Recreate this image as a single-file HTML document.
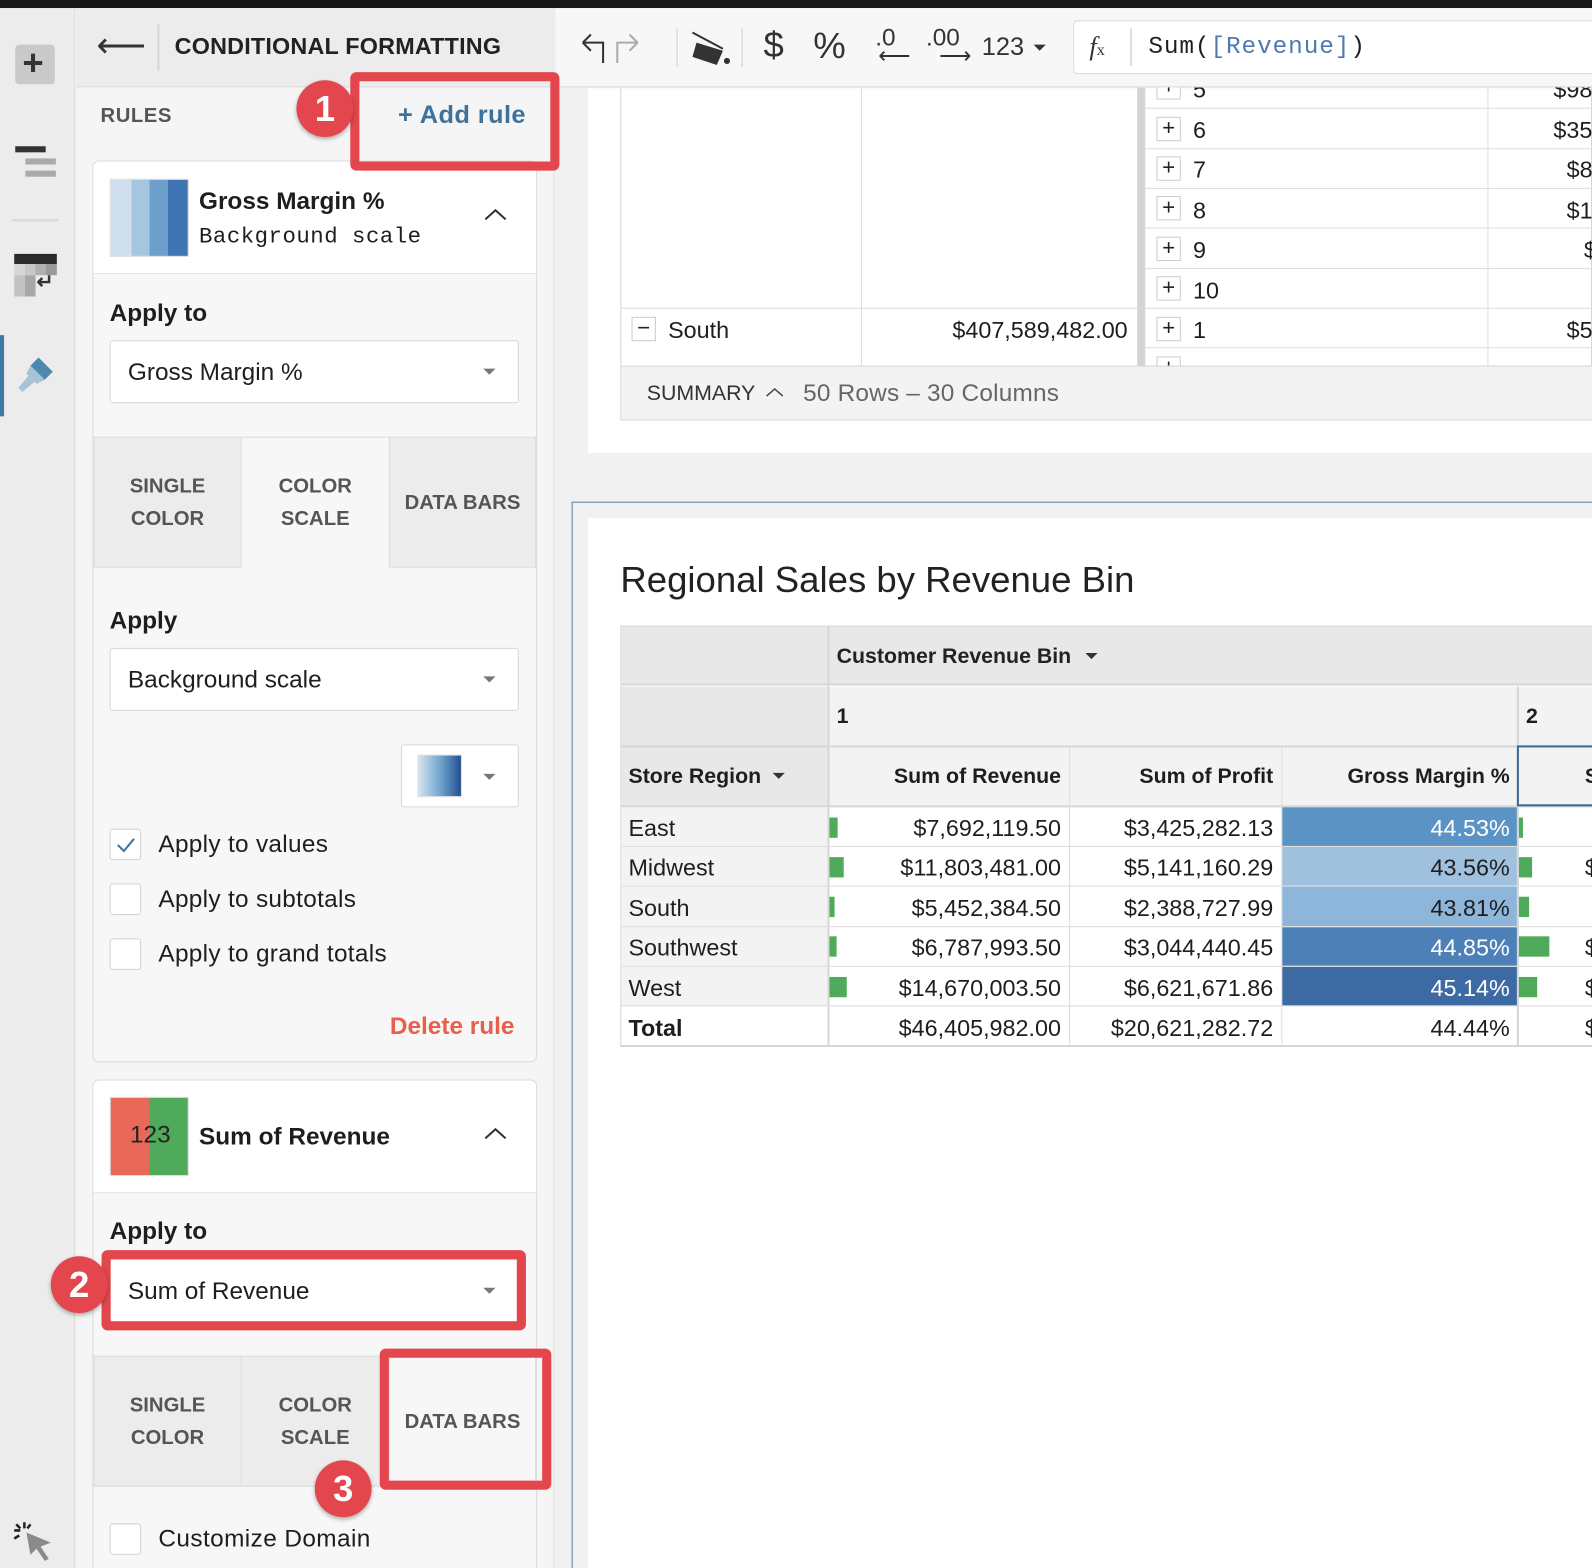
<!DOCTYPE html>
<html><head><meta charset="utf-8"><style>
*{box-sizing:border-box;margin:0;padding:0}
html,body{width:1592px;height:1568px;overflow:hidden;background:#f1f1f1}
#w{position:absolute;left:0;top:0;width:1568px;height:1544px;transform:scale(1.01531,1.01554);transform-origin:0 0;font-family:"Liberation Sans",sans-serif;color:#1e1e1e;overflow:hidden;background:#f1f1f1}
.a{position:absolute}
.t{position:absolute;white-space:nowrap;line-height:1}
.sel{position:absolute;background:#fff;border:1.5px solid #d6d6d6;border-radius:3px}
.car{position:absolute;width:0;height:0;border-left:6px solid transparent;border-right:6px solid transparent;border-top:6px solid #777}
.cb{position:absolute;width:31px;height:31px;background:#fff;border:1.5px solid #d2d2d2;border-radius:3px}
.tab{position:absolute;background:#ececec;border:1.5px solid #dcdcdc;color:#555;font-size:20px;font-weight:bold;text-align:center;line-height:32px;display:flex;align-items:center;justify-content:center}
.red{position:absolute;border:9px solid #e3474d;border-radius:6px}
.circ{position:absolute;width:56px;height:56px;border-radius:50%;background:#e3474d;color:#fff;font-size:36px;font-weight:bold;text-align:center;line-height:56px;box-shadow:0 2px 4px rgba(0,0,0,.3)}
.row{position:absolute;left:1128px;width:440px;height:1px;background:#ddd}
.pb{position:absolute;width:24px;height:24px;border:1.5px solid #ccc;background:#fff;font-size:22px;line-height:20px;text-align:center;color:#222}
.c{position:absolute;font-size:23px;line-height:1;white-space:nowrap}
</style></head><body><div id="w">
<div class="a" style="left:0;top:0;width:1568px;height:8px;background:#171717"></div>
<div class="a" style="left:0;top:8px;width:74px;height:1536px;background:#ececec;border-right:1.5px solid #dedede"></div>
<div class="a" style="left:15px;top:44px;width:39px;height:39px;background:#c9c9c9;border-radius:4px"></div>
<div class="t" style="left:22px;top:44px;font-size:36px;font-weight:bold;color:#333">+</div>
<div class="a" style="left:15px;top:144px;width:30px;height:6px;background:#333"></div>
<div class="a" style="left:25px;top:156px;width:30px;height:6px;background:#aaa"></div>
<div class="a" style="left:25px;top:168px;width:30px;height:6px;background:#aaa"></div>
<div class="a" style="left:12px;top:216px;width:46px;height:2px;background:#d8d8d8"></div>
<div class="a" style="left:14px;top:250px;width:42px;height:10px;background:#2b2b2b"></div>
<div class="a" style="left:14px;top:260px;width:42px;height:11px;background:linear-gradient(90deg,#d6d6d6 25%,#c8c8c8 25% 50%,#b0b0b0 50% 75%,#999 75%)"></div>
<div class="a" style="left:14px;top:271px;width:21px;height:21px;background:linear-gradient(90deg,#c2c2c2 50%,#a8a8a8 50%)"></div>
<div class="t" style="left:36px;top:268px;font-size:20px;font-weight:bold;color:#333">↵</div>
<div class="a" style="left:0;top:330px;width:4px;height:80px;background:#3f7aa3"></div>
<svg class="a" style="left:14px;top:348px" width="42" height="40" viewBox="0 0 42 40"><path d="M24 4 L38 18 L30 26 L16 12 Z" fill="#4c88b0"/><path d="M16 12 L30 26 L22 30 L12 20 Z" fill="#a7c3d6"/><path d="M14 22 L20 28 L8 38 L4 34 Z" fill="#a7c3d6"/></svg>
<svg class="a" style="left:10px;top:1497px" width="46" height="46" viewBox="0 0 46 46"><path d="M16 12 L40 22 L30 26 L38 38 L34 40 L26 28 L20 34 Z" fill="#8a8a8a"/><path d="M14 2v6M4 10h6M6 4l4 4M20 4l-3 4M4 18l5-3" stroke="#222" stroke-width="2.5"/></svg>
<div class="a" style="left:75px;top:8px;width:471px;height:1536px;background:#f5f5f5;border-right:1.5px solid #dedede"></div>
<div class="a" style="left:75px;top:8px;width:471px;height:78px;background:#ececec;border-bottom:1.5px solid #dcdcdc"></div>
<div class="t" style="left:95px;top:28px;font-size:34px;color:#333">⟵</div>
<div class="a" style="left:155px;top:24px;width:1.5px;height:46px;background:#d6d6d6"></div>
<div class="t" style="left:172px;top:34px;font-size:23px;font-weight:bold;color:#222;letter-spacing:.2px">CONDITIONAL FORMATTING</div>
<div class="t" style="left:99px;top:104px;font-size:20px;font-weight:bold;color:#555;letter-spacing:.5px">RULES</div>
<div class="t" style="left:392px;top:101px;font-size:25px;font-weight:bold;color:#3f729b;letter-spacing:.4px">+ Add rule</div>
<div class="a" style="left:91px;top:158px;width:438px;height:888px;background:#f7f7f7;border:1.5px solid #dcdcdc;border-radius:6px"></div>
<div class="a" style="left:92px;top:159px;width:436px;height:111px;background:#fff;border-bottom:1.5px solid #dcdcdc;border-radius:6px 6px 0 0"></div>
<div class="a" style="left:108px;top:176px;width:78px;height:77px;border:1.5px solid #ddd;background:linear-gradient(90deg,#d0dfee 0 27%,#a4c6e0 27% 50%,#6ca0cb 50% 74%,#3f75b2 74%)"></div>
<div class="t" style="left:196px;top:187px;font-size:24px;font-weight:bold">Gross Margin %</div>
<div class="t" style="left:196px;top:223px;font-size:22px;font-family:'Liberation Mono',monospace;letter-spacing:.5px">Background scale</div>
<svg class="a" style="left:476px;top:204px" width="24" height="14"><path d="M2 12 L12 3 L22 12" stroke="#333" stroke-width="2" fill="none"/></svg>
<div class="t" style="left:108px;top:297px;font-size:24px;font-weight:bold">Apply to</div>
<div class="sel" style="left:108px;top:335px;width:403px;height:62px"></div>
<div class="t" style="left:126px;top:355px;font-size:24px">Gross Margin %</div>
<div class="car" style="left:476px;top:363px"></div>
<div class="tab" style="left:92px;top:430px;width:146px;height:129px">SINGLE<br>COLOR</div>
<div class="tab" style="left:237px;top:430px;width:147px;height:129px;background:#f7f7f7;border-bottom:none">COLOR<br>SCALE</div>
<div class="tab" style="left:383px;top:430px;width:145px;height:129px">DATA BARS</div>
<div class="t" style="left:108px;top:600px;font-size:24px;font-weight:bold">Apply</div>
<div class="sel" style="left:108px;top:638px;width:403px;height:62px"></div>
<div class="t" style="left:126px;top:658px;font-size:24px">Background scale</div>
<div class="car" style="left:476px;top:666px"></div>
<div class="sel" style="left:395px;top:733px;width:116px;height:62px"></div>
<div class="a" style="left:411px;top:743px;width:44px;height:42px;border:1.5px solid #ddd;background:linear-gradient(90deg,#d6e4f0,#6aa0cb 55%,#24508f)"></div>
<div class="car" style="left:476px;top:762px"></div>
<div class="cb" style="left:108px;top:816px"></div>
<svg class="a" style="left:113px;top:822px" width="22" height="20"><path d="M3 10 L9 16 L19 4" stroke="#3f729b" stroke-width="2" fill="none"/></svg>
<div class="t" style="left:156px;top:820px;font-size:24px;letter-spacing:.3px">Apply to values</div>
<div class="cb" style="left:108px;top:870px"></div>
<div class="t" style="left:156px;top:874px;font-size:24px;letter-spacing:.3px">Apply to subtotals</div>
<div class="cb" style="left:108px;top:924px"></div>
<div class="t" style="left:156px;top:928px;font-size:24px;letter-spacing:.3px">Apply to grand totals</div>
<div class="t" style="left:384px;top:999px;font-size:24px;font-weight:bold;color:#e8604c">Delete rule</div>
<div class="a" style="left:91px;top:1063px;width:438px;height:500px;background:#f7f7f7;border:1.5px solid #dcdcdc;border-radius:6px"></div>
<div class="a" style="left:92px;top:1064px;width:436px;height:111px;background:#fff;border-bottom:1.5px solid #dcdcdc;border-radius:6px 6px 0 0"></div>
<div class="a" style="left:108px;top:1080px;width:78px;height:78px;border:1.5px solid #ddd;background:linear-gradient(90deg,#e86957 50%,#4fab5b 50%)"></div>
<div class="t" style="left:128px;top:1106px;font-size:24px;color:#222">123</div>
<div class="t" style="left:196px;top:1108px;font-size:24px;font-weight:bold">Sum of Revenue</div>
<svg class="a" style="left:476px;top:1109px" width="24" height="14"><path d="M2 12 L12 3 L22 12" stroke="#333" stroke-width="2" fill="none"/></svg>
<div class="t" style="left:108px;top:1201px;font-size:24px;font-weight:bold">Apply to</div>
<div class="sel" style="left:108px;top:1240px;width:403px;height:62px"></div>
<div class="t" style="left:126px;top:1260px;font-size:24px">Sum of Revenue</div>
<div class="car" style="left:476px;top:1268px"></div>
<div class="tab" style="left:92px;top:1335px;width:146px;height:129px">SINGLE<br>COLOR</div>
<div class="tab" style="left:237px;top:1335px;width:147px;height:129px">COLOR<br>SCALE</div>
<div class="tab" style="left:383px;top:1335px;width:145px;height:129px;background:#f7f7f7;border-bottom:none">DATA BARS</div>
<div class="cb" style="left:108px;top:1500px"></div>
<div class="t" style="left:156px;top:1504px;font-size:24px;letter-spacing:.4px">Customize Domain</div>
<!-- upper card -->
<div class="a" style="left:579px;top:87px;width:989px;height:359px;background:#fff"></div>
<div class="a" style="left:611px;top:86px;width:957px;height:328px;border:1.5px solid #d6d6d6;border-top:none"></div>
<div class="a" style="left:848px;top:86px;width:1px;height:275px;background:#ddd"></div>
<div class="a" style="left:1120px;top:86px;width:8px;height:275px;background:#d4d4d4"></div>
<div class="a" style="left:1465px;top:86px;width:1px;height:275px;background:#ddd"></div>
<div class="row" style="top:106px"></div><div class="row" style="top:146px"></div><div class="row" style="top:185px"></div><div class="row" style="top:224px"></div><div class="row" style="top:264px"></div><div class="row" style="top:303px"></div><div class="row" style="top:342px"></div>
<div class="a" style="left:612px;top:303px;width:508px;height:1px;background:#ddd"></div>
<div class="pb" style="left:1139px;top:74px">+</div><div class="c" style="left:1175px;top:77px">5</div><div class="c" style="left:1530px;top:77px">$98</div>
<div class="pb" style="left:1139px;top:115px">+</div><div class="c" style="left:1175px;top:117px">6</div><div class="c" style="left:1530px;top:117px">$35</div>
<div class="pb" style="left:1139px;top:154px">+</div><div class="c" style="left:1175px;top:156px">7</div><div class="c" style="left:1543px;top:156px">$8</div>
<div class="pb" style="left:1139px;top:193px">+</div><div class="c" style="left:1175px;top:196px">8</div><div class="c" style="left:1543px;top:196px">$1</div>
<div class="pb" style="left:1139px;top:233px">+</div><div class="c" style="left:1175px;top:235px">9</div><div class="c" style="left:1560px;top:235px">$</div>
<div class="pb" style="left:1139px;top:272px">+</div><div class="c" style="left:1175px;top:275px">10</div>
<div class="pb" style="left:1139px;top:312px">+</div><div class="c" style="left:1175px;top:314px">1</div><div class="c" style="left:1543px;top:314px">$5</div>
<div class="pb" style="left:1139px;top:351px">+</div>
<div class="pb" style="left:622px;top:312px">−</div><div class="c" style="left:658px;top:314px">South</div>
<div class="c" style="left:938px;top:314px">$407,589,482.00</div>
<div class="a" style="left:612px;top:360px;width:956px;height:53px;background:#f3f3f3;border-top:1.5px solid #d6d6d6"></div>
<div class="t" style="left:637px;top:377px;font-size:21px;color:#333">SUMMARY</div>
<svg class="a" style="left:753px;top:380px" width="20" height="12"><path d="M2 10 L10 3 L18 10" stroke="#444" stroke-width="1.5" fill="none"/></svg>
<div class="t" style="left:791px;top:376px;font-size:24px;color:#666;letter-spacing:.2px">50 Rows – 30 Columns</div>
<!-- toolbar (on top) -->
<div class="a" style="left:547px;top:8px;width:1021px;height:78px;background:#f7f7f7;border-bottom:1.5px solid #dcdcdc"></div>
<svg class="a" style="left:570px;top:28px" width="480" height="40" viewBox="0 0 480 40">
<path d="M4 14 L12 6 M4 14 L12 22 M4 14 H24 V34" stroke="#333" stroke-width="2" fill="none"/>
<path d="M58 14 L50 6 M58 14 L50 22 M58 14 H38 V34" stroke="#aaa" stroke-width="2" fill="none"/>
<line x1="97" y1="0" x2="97" y2="38" stroke="#ddd" stroke-width="1.5"/>
<path d="M112 4 L142 20" stroke="#333" stroke-width="2"/><path d="M116 14 L142 22 L136 36 L112 28 Z" fill="#333"/><circle cx="146" cy="32" r="3" fill="#333"/>
<line x1="161" y1="0" x2="161" y2="38" stroke="#ddd" stroke-width="1.5"/>
</svg>
<div class="t" style="left:752px;top:26px;font-size:36px;color:#333">$</div>
<div class="t" style="left:801px;top:27px;font-size:36px;color:#333">%</div>
<div class="t" style="left:862px;top:26px;font-size:24px;color:#333">.0</div>
<div class="t" style="left:865px;top:44px;font-size:22px;color:#333">⟵</div>
<div class="t" style="left:912px;top:26px;font-size:24px;color:#333">.00</div>
<div class="t" style="left:925px;top:44px;font-size:22px;color:#333">⟶</div>
<div class="t" style="left:967px;top:34px;font-size:25px;color:#333">123</div>
<div class="car" style="left:1018px;top:44px;border-top-color:#333"></div>
<div class="a" style="left:1057px;top:20px;width:520px;height:53px;background:#fff;border:1.5px solid #dcdcdc;border-radius:4px"></div>
<div class="t" style="left:1073px;top:33px;font-size:26px;font-family:'Liberation Serif',serif;font-style:italic;color:#333">f<span style="font-size:16px;font-style:normal">x</span></div>
<div class="a" style="left:1113px;top:28px;width:1.5px;height:37px;background:#ddd"></div>
<div class="t" style="left:1131px;top:35px;font-size:24px;font-family:'Liberation Mono',monospace;letter-spacing:.9px">Sum(<span style="color:#4d7ab0">[Revenue]</span>)</div>
<!-- lower selected area -->
<div class="a" style="left:563px;top:494px;width:1010px;height:1060px;border:1.5px solid #4a86b4;background:#f1f1f1"></div>
<div class="a" style="left:579px;top:510px;width:989px;height:1034px;background:#fff"></div>
<div class="t" style="left:611px;top:553px;font-size:36px;color:#222">Regional Sales by Revenue Bin</div>
<div class="a" style="left:611px;top:616px;width:957px;height:414px;border:1.5px solid #d6d6d6;border-right:none;background:#fff"></div>
<div class="a" style="left:612px;top:617px;width:956px;height:58px;background:#e8e8e8;border-bottom:2px solid #d6d6d6"></div>
<div class="a" style="left:612px;top:676px;width:204px;height:118px;background:#e8e8e8"></div>
<div class="a" style="left:816px;top:676px;width:752px;height:118px;background:#f3f3f3"></div>
<div class="a" style="left:612px;top:734px;width:956px;height:1.5px;background:#d6d6d6"></div>
<div class="a" style="left:612px;top:793px;width:956px;height:2px;background:#d6d6d6"></div>
<div class="a" style="left:815px;top:617px;width:1.5px;height:413px;background:#d6d6d6"></div>
<div class="a" style="left:1494px;top:676px;width:1.5px;height:354px;background:#d6d6d6"></div>
<div class="a" style="left:1053px;top:735px;width:1px;height:295px;background:#ddd"></div>
<div class="a" style="left:1262px;top:735px;width:1px;height:295px;background:#ddd"></div>
<div class="a" style="left:612px;top:795px;width:203px;height:195px;background:#f3f3f3"></div>
<div class="a" style="left:1263px;top:795px;width:231px;height:38px;background:#5b93c4"></div>
<div class="a" style="left:1263px;top:834px;width:231px;height:38px;background:#9fc1de"></div>
<div class="a" style="left:1263px;top:873px;width:231px;height:39px;background:#8db6da"></div>
<div class="a" style="left:1263px;top:913px;width:231px;height:38px;background:#4d80b6"></div>
<div class="a" style="left:1263px;top:952px;width:231px;height:38px;background:#3d6aa3"></div>
<div class="a" style="left:612px;top:833px;width:956px;height:1px;background:#ddd"></div>
<div class="a" style="left:612px;top:872px;width:956px;height:1px;background:#ddd"></div>
<div class="a" style="left:612px;top:912px;width:956px;height:1px;background:#ddd"></div>
<div class="a" style="left:612px;top:951px;width:956px;height:1px;background:#ddd"></div>
<div class="a" style="left:612px;top:990px;width:956px;height:1px;background:#ddd"></div>
<div class="a" style="left:611px;top:1029px;width:957px;height:2px;background:#d6d6d6"></div>
<div class="a" style="left:1494px;top:734px;width:80px;height:60px;border:2px solid #3d6a94"></div>
<div class="a" style="left:817px;top:805px;width:8px;height:20px;background:#4fab5b"></div>
<div class="a" style="left:817px;top:844px;width:14px;height:20px;background:#4fab5b"></div>
<div class="a" style="left:817px;top:883px;width:5px;height:20px;background:#4fab5b"></div>
<div class="a" style="left:817px;top:922px;width:7px;height:20px;background:#4fab5b"></div>
<div class="a" style="left:817px;top:962px;width:17px;height:20px;background:#4fab5b"></div>
<div class="a" style="left:1496px;top:805px;width:4px;height:20px;background:#4fab5b"></div>
<div class="a" style="left:1496px;top:844px;width:13px;height:20px;background:#4fab5b"></div>
<div class="a" style="left:1496px;top:883px;width:10px;height:20px;background:#4fab5b"></div>
<div class="a" style="left:1496px;top:922px;width:30px;height:20px;background:#4fab5b"></div>
<div class="a" style="left:1496px;top:962px;width:18px;height:20px;background:#4fab5b"></div>
<div class="t" style="left:824px;top:636px;font-size:21px;font-weight:bold;color:#222">Customer Revenue Bin</div>
<div class="car" style="left:1069px;top:643px;border-top-color:#333"></div>
<div class="t" style="left:824px;top:695px;font-size:21px;font-weight:bold">1</div>
<div class="t" style="left:1503px;top:695px;font-size:21px;font-weight:bold">2</div>
<div class="t" style="left:619px;top:754px;font-size:21px;font-weight:bold">Store Region</div>
<div class="car" style="left:761px;top:761px;border-top-color:#333"></div>
<div class="t" style="left:816px;top:754px;width:229px;text-align:right;font-size:21px;font-weight:bold">Sum of Revenue</div>
<div class="t" style="left:1054px;top:754px;width:200px;text-align:right;font-size:21px;font-weight:bold">Sum of Profit</div>
<div class="t" style="left:1263px;top:754px;width:224px;text-align:right;font-size:21px;font-weight:bold">Gross Margin %</div>
<div class="t" style="left:1561px;top:754px;font-size:21px;font-weight:bold">S</div>
<div class="c" style="left:619px;top:804px">East</div><div class="c" style="left:816px;top:804px;width:229px;text-align:right">$7,692,119.50</div><div class="c" style="left:1054px;top:804px;width:200px;text-align:right">$3,425,282.13</div><div class="c" style="left:1263px;top:804px;width:224px;text-align:right;color:#fff">44.53%</div>
<div class="c" style="left:619px;top:843px">Midwest</div><div class="c" style="left:816px;top:843px;width:229px;text-align:right">$11,803,481.00</div><div class="c" style="left:1054px;top:843px;width:200px;text-align:right">$5,141,160.29</div><div class="c" style="left:1263px;top:843px;width:224px;text-align:right">43.56%</div><div class="c" style="left:1561px;top:843px">$</div>
<div class="c" style="left:619px;top:883px">South</div><div class="c" style="left:816px;top:883px;width:229px;text-align:right">$5,452,384.50</div><div class="c" style="left:1054px;top:883px;width:200px;text-align:right">$2,388,727.99</div><div class="c" style="left:1263px;top:883px;width:224px;text-align:right">43.81%</div>
<div class="c" style="left:619px;top:922px">Southwest</div><div class="c" style="left:816px;top:922px;width:229px;text-align:right">$6,787,993.50</div><div class="c" style="left:1054px;top:922px;width:200px;text-align:right">$3,044,440.45</div><div class="c" style="left:1263px;top:922px;width:224px;text-align:right;color:#fff">44.85%</div><div class="c" style="left:1561px;top:922px">$</div>
<div class="c" style="left:619px;top:962px">West</div><div class="c" style="left:816px;top:962px;width:229px;text-align:right">$14,670,003.50</div><div class="c" style="left:1054px;top:962px;width:200px;text-align:right">$6,621,671.86</div><div class="c" style="left:1263px;top:962px;width:224px;text-align:right;color:#fff">45.14%</div><div class="c" style="left:1561px;top:962px">$</div>
<div class="c" style="left:619px;top:1001px;font-weight:bold">Total</div><div class="c" style="left:816px;top:1001px;width:229px;text-align:right">$46,405,982.00</div><div class="c" style="left:1054px;top:1001px;width:200px;text-align:right">$20,621,282.72</div><div class="c" style="left:1263px;top:1001px;width:224px;text-align:right">44.44%</div><div class="c" style="left:1561px;top:1001px">$</div>
<div class="red" style="left:345px;top:71px;width:206px;height:97px"></div>
<div class="red" style="left:100px;top:1231px;width:418px;height:79px"></div>
<div class="red" style="left:374px;top:1328px;width:169px;height:139px"></div>
<div class="circ" style="left:292px;top:79px">1</div>
<div class="circ" style="left:50px;top:1237px">2</div>
<div class="circ" style="left:310px;top:1438px">3</div>
</div></body></html>
